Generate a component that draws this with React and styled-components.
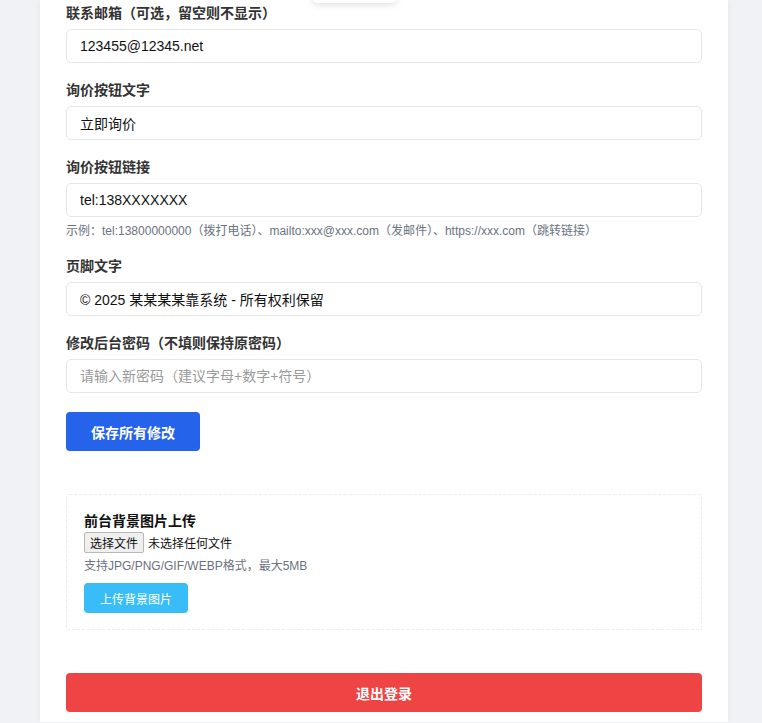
import styled, { createGlobalStyle } from "styled-components";

const GlobalStyle = createGlobalStyle`
  * {
    box-sizing: border-box;
  }
  body {
    margin: 0;
    background: #f1f2f5;
    font-family: "Liberation Sans", "Noto Sans CJK SC", sans-serif;
    color: #333;
  }
`;

const Page = styled.div`
  padding-left: 40px;
`;

const Card = styled.div`
  position: relative;
  width: 688px;
  background: #ffffff;
  padding: 3px 26px 10px 26px;
  box-shadow: 0 0 6px rgba(0, 0, 0, 0.06);
`;

// toast left over the top edge, mostly scrolled away
const Popover = styled.div`
  position: absolute;
  top: -30px;
  left: 272px;
  width: 85px;
  height: 33px;
  background: #fff;
  border-radius: 6px;
  box-shadow: 0 2px 6px rgba(0, 0, 0, 0.12);
`;

const Field = styled.div`
  display: flex;
  flex-direction: column;
  margin-bottom: 17px;
`;

const Label = styled.label`
  font-size: 14px;
  line-height: 20px;
  font-weight: 700;
  color: #333;
  margin-bottom: 6px;
`;

const Input = styled.input`
  width: 100%;
  height: 34px;
  padding: 0 13px;
  border: 1px solid #e6e7ea;
  border-radius: 5px;
  font-family: inherit;
  font-size: 14px;
  color: #111;
  outline: none;

  &::placeholder {
    color: #9a9a9a;
  }
`;

const Hint = styled.p`
  margin: ${(p) => p.$top || 6}px 0 0 0;
  font-size: 12px;
  line-height: 16px;
  color: #6b7280;
`;

const Button = styled.button`
  display: block;
  border: none;
  border-radius: 4px;
  color: #fff;
  font-family: inherit;
  font-weight: 700;
  cursor: pointer;
`;

const SaveButton = styled(Button)`
  margin-top: 19px;
  height: 39px;
  padding: 0 25px;
  font-size: 14px;
  background: #2563eb;
`;

const UploadBox = styled.div`
  margin-top: 43px;
  padding: 17px 17px 16px 17px;
  border: 1px dashed #ececec;
  border-radius: 3px;
`;

const UploadTitle = styled.h3`
  margin: 0 0 1px 0;
  font-size: 14px;
  line-height: 19px;
  font-weight: 700;
  color: #111;
`;

const FileRow = styled.div`
  display: flex;
  align-items: center;
  gap: 4px;
  font-size: 12px;
  color: #111;
`;

const FileButton = styled.span`
  display: inline-flex;
  align-items: center;
  height: 21px;
  padding: 0 5px;
  background: #efefef;
  border: 1px solid #b8b8b8;
  border-radius: 2px;
  font-size: 12px;
  color: #111;
`;

const UploadButton = styled(Button)`
  margin-top: 9px;
  height: 30px;
  padding: 0 16px;
  font-size: 12px;
  font-weight: 400;
  background: #38bdf8;
`;

const LogoutButton = styled(Button)`
  margin-top: 43px;
  width: 100%;
  height: 39px;
  font-size: 14px;
  background: #ef4444;
`;

const fields = [
  { label: "联系邮箱（可选，留空则不显示）", value: "123455@12345.net" },
  { label: "询价按钮文字", value: "立即询价" },
  {
    label: "询价按钮链接",
    value: "tel:138XXXXXXX",
    hint: "示例：tel:13800000000（拨打电话）、mailto:xxx@xxx.com（发邮件）、https://xxx.com（跳转链接）",
  },
  { label: "页脚文字", value: "© 2025 某某某某靠系统 - 所有权利保留" },
  {
    label: "修改后台密码（不填则保持原密码）",
    placeholder: "请输入新密码（建议字母+数字+符号）",
    type: "password",
  },
];

const App = () => {
  return (
    <Page>
      <GlobalStyle />
      <Card>
        <Popover />
        {fields.map((f) => (
          <Field key={f.label}>
            <Label>{f.label}</Label>
            <Input
              type={f.type || "text"}
              defaultValue={f.value}
              placeholder={f.placeholder}
            />
            {f.hint && <Hint>{f.hint}</Hint>}
          </Field>
        ))}
        <SaveButton>保存所有修改</SaveButton>

        <UploadBox>
          <UploadTitle>前台背景图片上传</UploadTitle>
          <FileRow>
            <FileButton>选择文件</FileButton>
            未选择任何文件
          </FileRow>
          <Hint $top={5}>支持JPG/PNG/GIF/WEBP格式，最大5MB</Hint>
          <UploadButton>上传背景图片</UploadButton>
        </UploadBox>

        <LogoutButton>退出登录</LogoutButton>
      </Card>
    </Page>
  );
};

export default App;
